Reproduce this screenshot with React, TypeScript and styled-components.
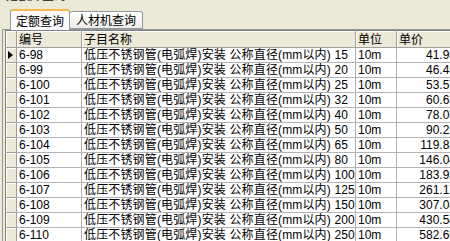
import styled, { createGlobalStyle } from "styled-components";

const GlobalStyle = createGlobalStyle`
  html, body {
    margin: 0;
    padding: 0;
    background: #ece9d8;
    overflow: hidden;
  }
  body {
    font-family: "Liberation Sans", "Noto Sans CJK SC", sans-serif;
    font-size: 12px;
    color: #000;
  }
`;

const rows = [
  { code: "6-98", dn: "15", price: "41.96" },
  { code: "6-99", dn: "20", price: "46.45" },
  { code: "6-100", dn: "25", price: "53.57" },
  { code: "6-101", dn: "32", price: "60.63" },
  { code: "6-102", dn: "40", price: "78.05" },
  { code: "6-103", dn: "50", price: "90.21" },
  { code: "6-104", dn: "65", price: "119.82" },
  { code: "6-105", dn: "80", price: "146.04" },
  { code: "6-106", dn: "100", price: "183.92" },
  { code: "6-107", dn: "125", price: "261.17" },
  { code: "6-108", dn: "150", price: "307.08" },
  { code: "6-109", dn: "200", price: "430.54" },
  { code: "6-110", dn: "250", price: "582.66" },
];

const App = () => {
  return (
    <Frame>
      <GlobalStyle />
      <Caption>
        <span>定额库查询</span>
      </Caption>

      <TabStrip>
        <Tab $active>定额查询</Tab>
        <Tab>人材机查询</Tab>
      </TabStrip>

      <Panel>
        <Grid>
          <colgroup>
            <col style={{ width: 11 }} />
            <col style={{ width: 65 }} />
            <col style={{ width: 274 }} />
            <col style={{ width: 41 }} />
            <col style={{ width: 62 }} />
          </colgroup>
          <thead>
            <tr>
              <HeadCell />
              <HeadCell>编号</HeadCell>
              <HeadCell>子目名称</HeadCell>
              <HeadCell>单位</HeadCell>
              <HeadCell>单价</HeadCell>
            </tr>
          </thead>
          <tbody>
            {rows.map((r, i) => (
              <tr key={r.code}>
                <Indicator>{i === 0 && <Arrow />}</Indicator>
                <Cell>{r.code}</Cell>
                <Cell $wide>{`低压不锈钢管(电弧焊)安装 公称直径(mm以内) ${r.dn}`}</Cell>
                <Cell>10m</Cell>
                <Cell $right>{r.price}</Cell>
              </tr>
            ))}
          </tbody>
        </Grid>
      </Panel>
    </Frame>
  );
};

const Frame = styled.div`
  width: 450px;
  height: 241px;
  overflow: hidden;
  display: flex;
  flex-direction: column;
`;

const Caption = styled.div`
  height: 4px;
  overflow: hidden;
  padding-left: 6px;
  span {
    display: block;
    margin-top: -11px;
    font-size: 12px;
    line-height: 14px;
    font-weight: bold;
    color: #404040;
  }
`;

const TabStrip = styled.div`
  height: 25px;
  display: flex;
  align-items: flex-end;
  border-bottom: 1px solid #919b9c;
  margin: 0 0 0 2px;
  padding-left: 8px;
`;

const Tab = styled.div<{ $active?: boolean }>`
  box-sizing: border-box;
  height: ${(p) => (p.$active ? "21px" : "18px")};
  margin-bottom: ${(p) => (p.$active ? "-1px" : "0")};
  padding: 0 ${(p) => (p.$active ? "5px" : "6px")};
  display: flex;
  align-items: center;
  border: 1px solid #919b9c;
  border-bottom: ${(p) => (p.$active ? "none" : "1px solid #919b9c")};
  border-top: ${(p) => (p.$active ? "2px solid #f5b94a" : "1px solid #919b9c")};
  border-left: ${(p) => (p.$active ? "1px solid #919b9c" : "none")};
  border-radius: 3px 3px 0 0;
  background: ${(p) =>
    p.$active ? "#fcfcfe" : "linear-gradient(#ffffff, #ecebe6)"};
  font-family: "Noto Sans CJK SC", sans-serif;
  font-size: 12px;
  line-height: 14px;
  white-space: nowrap;
  position: relative;
  z-index: ${(p) => (p.$active ? 1 : 0)};
`;

const Panel = styled.div`
  flex: 1;
  margin-left: 2px;
  border-left: 1px solid #919b9c;
  padding-left: 2px;
  overflow: hidden;
`;

const Grid = styled.table`
  table-layout: fixed;
  border-collapse: collapse;
  width: 453px;
  border-left: 1px solid #808080;
  border-top: 1px solid #808080;
  background: #fff;
`;

const HeadCell = styled.th`
  height: 15px;
  padding: 1px 0 0 2px;
  background: #ece9d8;
  border-right: 1px solid #a0a0a0;
  border-bottom: 1px solid #a0a0a0;
  box-shadow: inset 1px 1px 0 #fff;
  text-align: left;
  font-weight: normal;
  font-size: 12px;
  line-height: 14px;
  white-space: nowrap;
  overflow: hidden;
`;

const Indicator = styled.td`
  height: 14px;
  padding: 0;
  background: #ece9d8;
  border-right: 1px solid #a0a0a0;
  border-bottom: 1px solid #a0a0a0;
  box-shadow: inset 1px 1px 0 #fff;
  vertical-align: middle;
`;

const Arrow = styled.div`
  width: 0;
  height: 0;
  margin-left: 2px;
  border-top: 4px solid transparent;
  border-bottom: 4px solid transparent;
  border-left: 5px solid #000;
`;

const Cell = styled.td<{ $right?: boolean; $wide?: boolean }>`
  box-sizing: border-box;
  height: 14px;
  padding: 1px ${(p) => (p.$right ? "2px" : "0")} 0 ${(p) => (p.$right ? "0" : "2px")};
  border-right: 1px solid #b4b4b4;
  border-bottom: 1px solid #b4b4b4;
  text-align: ${(p) => (p.$right ? "right" : "left")};
  font-size: 12px;
  line-height: 13px;
  letter-spacing: ${(p) => (p.$wide ? "0.15px" : "0")};
  white-space: pre;
  overflow: hidden;
`;

export default App;
